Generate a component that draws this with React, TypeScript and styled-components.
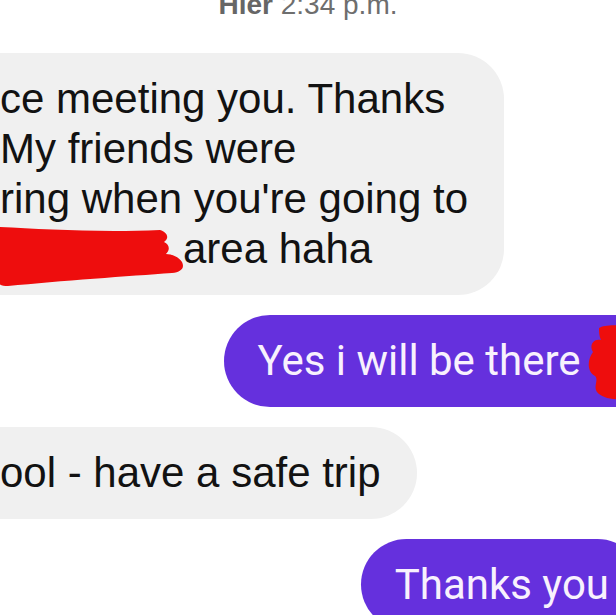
import React from "react";
import styled, { createGlobalStyle } from "styled-components";

const Global = createGlobalStyle`
  html, body { margin: 0; padding: 0; background: #ffffff; }
  body { overflow: hidden; }
`;

const Screen = styled.div`
  width: 616px;
  height: 615px;
  overflow: hidden;
  background: #ffffff;
  display: flex;
  flex-direction: column;
`;

const Stamp = styled.div`
  margin-top: -9px;
  text-align: center;
  font-family: "Liberation Sans", Arial, sans-serif;
  font-size: 28px;
  line-height: 28px;
  color: #6e6e6e;
  white-space: nowrap;
  b { font-weight: 700; color: #666; }
`;

const Thread = styled.div`
  margin-top: 34px;
  display: flex;
  flex-direction: column;
  gap: 20px;
`;

const Row = styled.div<{ $out?: boolean }>`
  display: flex;
  justify-content: ${(p) => (p.$out ? "flex-end" : "flex-start")};
`;

const Bubble = styled.div<{ $out?: boolean; $pull?: number }>`
  border-radius: 46px;
  white-space: nowrap;
  padding: 21px 36px 21px 34px;
  background: ${(p) => (p.$out ? "#6530dd" : "#f0f0f0")};
  color: ${(p) => (p.$out ? "#f8f1fd" : "#121212")};
  font-family: ${(p) =>
    p.$out ? "Roboto, Arial, sans-serif" : '"Liberation Sans", Arial, sans-serif'};
  font-size: 42px;
  line-height: ${(p) => (p.$out ? "49px" : "50px")};
  ${(p) =>
    p.$out
      ? `margin-right: -${p.$pull ?? 0}px; padding-right: 34px;`
      : `margin-left: -60px; padding-left: 60px;`}
`;

const Line = styled.div`
  display: block;
`;

const Redacted = styled.span<{ $w: number }>`
  display: inline-block;
  position: relative;
  width: ${(p) => p.$w}px;
  height: 50px;
  vertical-align: top;
  svg {
    position: absolute;
    left: 0;
    top: 0;
    overflow: visible;
  }
`;

const INK = "#ee0d0d";

export default function App() {
  return (
    <Screen>
      <Global />
      <Stamp>
        <b>Hier</b> 2:34 p.m.
      </Stamp>
      <Thread>
        <Row>
          <Bubble>
            <Line>ce meeting you. Thanks</Line>
            <Line>My friends were</Line>
            <Line>ring when you're going to</Line>
            <Line>
              <Redacted $w={183}>
                <svg width="190" height="64" viewBox="0 0 190 64">
                  <path
                    fill={INK}
                    d="M-2 3 C40 5 100 9 160 6 C167 8 170 14 164 18 C170 21 170 26 166 30 C172 30 179 33 182 38 C185 44 181 48 172 49 C130 52 60 57 8 62 C2 62 -2 60 -2 58 Z"
                  />
                </svg>
              </Redacted>
              area haha
            </Line>
          </Bubble>
        </Row>
        <Row $out>
          <Bubble $out $pull={49}>
            Yes i will be there{" "}
            <Redacted $w={40}>
              <svg width="50" height="80" viewBox="0 0 50 80">
                <path
                  fill={INK}
                  d="M8 -8 C14 -12 36 -12 44 -6 L46 60 C34 66 12 64 6 56 C2 50 8 44 4 40 C-4 36 -4 24 2 16 C-2 10 2 2 10 4 C8 0 8 -4 8 -8 Z"
                />
              </svg>
            </Redacted>
          </Bubble>
        </Row>
        <Row>
          <Bubble>
            <Line>ool - have a safe trip</Line>
          </Bubble>
        </Row>
        <Row $out>
          <Bubble $out $pull={27}>
            Thanks you
          </Bubble>
        </Row>
      </Thread>
    </Screen>
  );
}
